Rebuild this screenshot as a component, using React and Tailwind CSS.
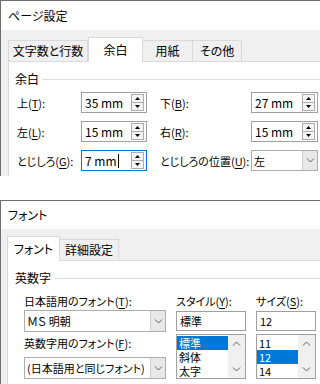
import React from 'react'

// Two stacked Windows dialogs: ページ設定 (余白 tab) and フォント.

const Chevron = ({ up = false }) => (
  <svg width="9" height="5" viewBox="0 0 9 5">
    <path d={up ? 'M1 4.5L4.5 1L8 4.5' : 'M1 0.5L4.5 4L8 0.5'} stroke="#606060" strokeWidth="1" fill="none" />
  </svg>
)

function Key({ label, k, rest = '):' }) {
  return (
    <span className="whitespace-nowrap">
      {label}(<u className="underline-offset-2">{k}</u>{rest}
    </span>
  )
}

// ── spin box: text + little up/down buttons ────────────────────────────────
function Spin({ value, focused }) {
  return (
    <div
      className={`flex h-[21px] w-full items-center border bg-white pl-[3px] pr-[2px] ${
        focused ? 'border-[#0078d7]' : 'border-[#a0a0a0]'
      }`}
    >
      <div className="flex flex-1 items-center text-[12px]">
        <span>{value}</span>
        {focused && <span className="ml-px h-[14px] w-px bg-black" />}
      </div>
      <div className="flex h-[17px] w-[13px] flex-col border border-[#adadad] bg-[#f4f4f4]">
        <div className="flex flex-1 items-center justify-center border-b border-[#adadad]">
          <svg width="5" height="3" viewBox="0 0 5 3">
            <path d="M2.5 0L5 3H0Z" fill="#000" />
          </svg>
        </div>
        <div className="flex flex-1 items-center justify-center">
          <svg width="5" height="3" viewBox="0 0 5 3">
            <path d="M0 0H5L2.5 3Z" fill="#000" />
          </svg>
        </div>
      </div>
    </div>
  )
}

function Select({ value, h = 'h-[21px]' }) {
  return (
    <div className={`flex ${h} w-full items-stretch border border-[#adadad] bg-white`}>
      <div className="flex flex-1 items-center overflow-hidden whitespace-nowrap pl-[2px]">{value}</div>
      <div className="flex w-[15px] shrink-0 items-center justify-center border-l border-[#d0d0d0] bg-[#e8e8e8]">
        <Chevron />
      </div>
    </div>
  )
}

function Tab({ children, active, w }) {
  return active ? (
    <div
      className={`relative z-10 -mb-px flex h-[25px] items-center justify-center border border-b-0 border-[#d9d9d9] bg-white text-[12px] ${w}`}
    >
      {children}
    </div>
  ) : (
    <div
      className={`-ml-px flex h-[21px] items-center justify-center border border-b-0 border-[#d9d9d9] bg-[#f0f0f0] text-[12px] first:ml-0 ${w}`}
    >
      {children}
    </div>
  )
}

function ListBox({ items, sel }) {
  return (
    <div className="flex h-[45px] w-full overflow-hidden border border-[#a0a0a0] bg-white">
      <div className="flex flex-1 flex-col pt-px">
        {items.map((it, i) => (
          <div
            key={it}
            className={`flex h-[14px] shrink-0 items-center pl-[2px] leading-[14px] ${
              i === sel ? 'bg-[#0078d7] text-white' : ''
            }`}
          >
            {it}
          </div>
        ))}
      </div>
      <div className="flex w-[17px] flex-col items-center justify-between bg-[#f0f0f0] pb-[6px] pt-[6px]">
        <Chevron up />
        <Chevron />
      </div>
    </div>
  )
}

function Row({ l, r }) {
  return (
    <div className="flex h-[21px] items-center">
      <div className="w-[64px] shrink-0">{l[0]}</div>
      <div className="w-[66px] shrink-0">{l[1]}</div>
      <div className="ml-[13px] w-[91px] shrink-0">{r[0]}</div>
      <div className="w-[67px] shrink-0">{r[1]}</div>
    </div>
  )
}

export default function App() {
  return (
    <div className="flex h-[384px] w-[320px] flex-col overflow-hidden bg-white font-['Noto_Sans_CJK_JP',sans-serif] text-[11px] leading-[16px] text-black [font-feature-settings:'palt']">
      {/* ── ページ設定 ─────────────────────────────────────────── */}
      <div className="flex h-[176px] shrink-0 flex-col overflow-hidden border-l border-t border-[#6d6d6d]">
        <div className="flex h-[29px] shrink-0 items-center pl-[7px] text-[12px]">ページ設定</div>
        <div className="flex flex-1 flex-col bg-[#f0f0f0] pl-[7px] pt-[7px]">
          <div className="flex h-[24px] shrink-0 items-end">
            <Tab w="w-[80px]">文字数と行数</Tab>
            <Tab active w="w-[55px]">余白</Tab>
            <Tab w="w-[51px]">用紙</Tab>
            <Tab w="w-[50px]">その他</Tab>
          </div>
          <div className="flex-1 border-l border-t border-[#d9d9d9] bg-white pt-[9px]">
            <div className="flex items-center pl-[6px] text-[12px]">
              <span>余白</span>
              <div className="ml-[3px] h-px flex-1 bg-[#dcdcdc]" />
            </div>
            <div className="mt-[5px] flex flex-col gap-[8px] pl-[8px]">
              <Row
                l={[<Key label="上" k="T" />, <Spin value="35 mm" />]}
                r={[<Key label="下" k="B" />, <Spin value="27 mm" />]}
              />
              <Row
                l={[<Key label="左" k="L" />, <Spin value="15 mm" />]}
                r={[<Key label="右" k="R" />, <Spin value="15 mm" />]}
              />
              <Row
                l={[<Key label="とじしろ" k="G" />, <Spin value="7 mm" focused />]}
                r={[<Key label="とじしろの位置" k="U" />, <Select value="左" />]}
              />
            </div>
          </div>
        </div>
      </div>

      {/* ── フォント ───────────────────────────────────────────── */}
      <div className="mt-[24px] flex flex-1 flex-col overflow-hidden border-l border-t border-[#6d6d6d]">
        <div className="flex h-[28px] shrink-0 items-center pl-[7px] text-[12px]">フォント</div>
        <div className="flex flex-1 flex-col bg-[#f0f0f0] pl-[6px] pt-[8px]">
          <div className="flex h-[23px] shrink-0 items-end">
            <Tab active w="w-[53px]">フォント</Tab>
            <Tab w="w-[60px]">詳細設定</Tab>
          </div>
          <div className="flex-1 border-l border-t border-[#d9d9d9] bg-white pt-[9px]">
            <div className="flex items-center pl-[7px] text-[12px]">
              <span>英数字</span>
              <div className="ml-[4px] h-px flex-1 bg-[#dcdcdc]" />
            </div>
            <div className="mt-[7px] flex items-start pl-[16px]">
              <div className="flex w-[142px] shrink-0 flex-col">
                <Key label="日本語用のフォント" k="T" />
                <div className="mt-[1px]">
                  <Select value="ＭＳ 明朝" h="h-[22px]" />
                </div>
                <div className="mt-[3px]">
                  <Key label="英数字用のフォント" k="F" />
                </div>
                <div className="mt-[6px]">
                  <Select value="(日本語用と同じフォント)" h="h-[22px]" />
                </div>
              </div>
              <div className="ml-[10px] flex w-[70px] shrink-0 flex-col">
                <Key label="スタイル" k="Y" />
                <div className="mt-[2px] flex h-[20px] items-center border border-[#a0a0a0] pl-[3px]">標準</div>
                <div className="mt-[3px]">
                  <ListBox items={['標準', '斜体', '太字']} sel={0} />
                </div>
              </div>
              <div className="ml-[10px] flex w-[60px] shrink-0 flex-col">
                <Key label="サイズ" k="S" />
                <div className="mt-[2px] flex h-[20px] items-center border border-[#a0a0a0] pl-[3px]">12</div>
                <div className="mt-[3px]">
                  <ListBox items={['11', '12', '14']} sel={1} />
                </div>
              </div>
            </div>
          </div>
        </div>
      </div>
    </div>
  )
}
